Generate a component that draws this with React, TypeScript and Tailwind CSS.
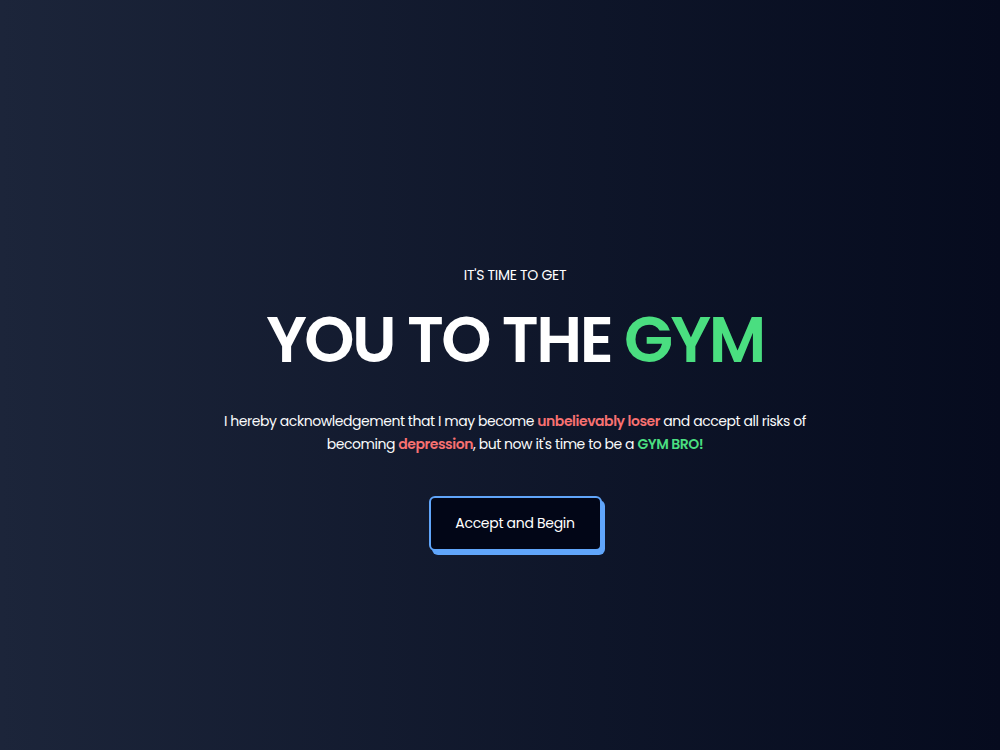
export default function App() {
  return (
    <div
      className="min-h-screen w-full bg-linear-to-r from-[#1c253a] to-[#060b1e] flex flex-col items-center pt-[266px] pl-[30px] text-white"
      style={{ fontFamily: 'Poppins, Inter, "Noto Sans", sans-serif' }}
    >
      <p className="text-[14px] leading-[18px] uppercase tracking-[-0.3px]">It's time to get</p>
      <h1 className="mt-[16px] text-[64px] leading-[80px] font-semibold tracking-[-2.5px]">
        YOU TO THE <span className="text-[#4ade80]">GYM</span>
      </h1>
      <p className="mt-[30px] max-w-[600px] text-center text-[14px] leading-[23px] tracking-[-0.45px] text-gray-50">
        I hereby acknowledgement that I may become{' '}
        <span className="font-semibold text-[#f87171]">unbelievably loser</span> and accept all risks of becoming{' '}
        <span className="font-semibold text-[#f87171]">depression</span>, but now it's time to be a{' '}
        <span className="font-semibold text-[#4ade80]">GYM BRO!</span>
      </p>
      <button className="mt-[40px] h-[55px] w-[173px] rounded-md border-2 border-[#60a5fa] bg-[#020617] text-[14px] tracking-[-0.3px] text-white shadow-[3px_4px_0_#60a5fa]">
        Accept and Begin
      </button>
    </div>
  );
}
